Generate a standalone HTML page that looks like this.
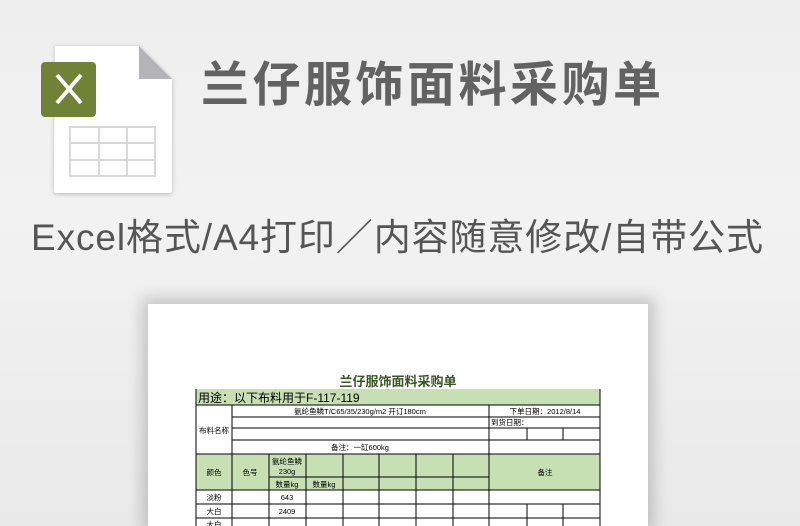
<!DOCTYPE html>
<html><head><meta charset="utf-8"><style>
html,body{margin:0;width:800px;height:526px;overflow:hidden}
body{background:linear-gradient(#eeeeee,#f2f2f2 40%,#e9e9e9);font-family:"Liberation Sans","Noto Sans CJK SC",sans-serif;position:relative}
.t1{position:absolute;left:201px;top:56px;font-size:48px;font-weight:bold;color:#626262;letter-spacing:3.5px;white-space:nowrap;line-height:60px}
.t2{position:absolute;left:31px;top:214px;font-size:37px;color:#555;white-space:nowrap;line-height:48px;letter-spacing:0.9px}
.paper{position:absolute;left:148px;top:304px;width:500px;height:222px;background:#fff;box-shadow:0 0 14px 6px rgba(0,0,0,0.18)}
</style></head><body>
<svg style="position:absolute;left:0;top:0" width="200" height="210">
<defs><filter id="s" x="-20%" y="-20%" width="140%" height="140%"><feDropShadow dx="0" dy="1" stdDeviation="2" flood-opacity="0.25"/></filter></defs>
<path d="M55 46 H139 L172 79 V190 Q172 193 169 193 H57 Q54 193 54 190 Z" fill="#fff" filter="url(#s)"/>
<path d="M139 46 L172 79 H139 Z" fill="#b4b4b8"/>
<rect x="41" y="62" width="55" height="55" rx="4" fill="#6f8235"/>
<path d="M57 75 L81 103 M81 75 L57 103" stroke="#fff" stroke-width="4"/>
<g stroke="#d8d8d8" stroke-width="2" fill="none"><rect x="70" y="127" width="85" height="49"/><path d="M70 143 H155 M70 160 H155 M99 127 V176 M127 127 V176"/></g>
</svg>
<div class="t1">兰仔服饰面料采购单</div>
<div class="t2">Excel格式/A4打印／内容随意修改/自带公式</div>
<div class="paper"></div>
<svg style="position:absolute;left:0;top:0" width="800" height="526" font-family="Liberation Sans,Noto Sans CJK SC,sans-serif">
<text x="398" y="386" font-size="13" font-weight="bold" fill="#375623" text-anchor="middle">兰仔服饰面料采购单</text>
<rect x="196" y="389" width="404" height="16" fill="#c6e0b4"/>
<rect x="196" y="454" width="404" height="36" fill="#c6e0b4"/>
<text x="198" y="402" font-size="12" fill="#000">用途：以下布料用于F-117-119</text>
<g font-size="7.5" fill="#000" text-anchor="middle">
<text x="360" y="414">氨纶鱼鳞T/C65/35/230g/m2  开订180cm</text>
<text x="545" y="414">下单日期：2012/8/14</text>
<text x="214" y="433">布料名称</text>
<text x="360" y="450">备注：一缸600kg</text>
<text x="214" y="475">颜色</text><text x="250" y="475">色号</text>
<text x="287" y="464">氨纶鱼鳞</text><text x="287" y="474">230g</text>
<text x="287" y="487">数量kg</text><text x="324" y="487">数量kg</text>
<text x="545" y="475">备注</text>
<text x="214" y="500">淡粉</text><text x="287" y="500">643</text>
<text x="214" y="514">大白</text><text x="287" y="514">2409</text>
<text x="214" y="527">大白</text>
</g>
<text x="491" y="425" font-size="7.5">到货日期：</text>
<g stroke="#000" stroke-width="1" fill="none">
<path d="M196 389 V526 M600 389 V526 M196 405 H600 M232 405 V526 M489 405 V526 M232 417 H600 M232 428 H600 M232 440 H600 M196 454 H600 M527 428 V440 M563 428 V440 M527 504 V526 M563 504 V526"/>
<path d="M269 454 V526 M306 454 V526 M343 454 V526 M379 454 V526 M416 454 V526 M453 454 V526 M269 477 H489 M196 490 H600 M196 504 H600 M196 518 H600"/>
</g>
</svg>
</body></html>
